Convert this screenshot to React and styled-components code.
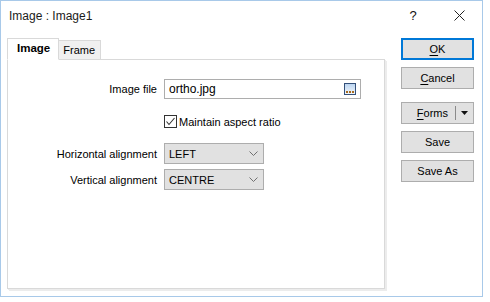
import React from 'react';
import styled, { createGlobalStyle } from 'styled-components';

const Global = createGlobalStyle`
  html, body {
    margin: 0;
    background: #ffffff;
  }
  body {
    font-family: 'Liberation Sans', Arial, sans-serif;
    font-size: 11px;
    color: #000;
  }
`;

const Window = styled.div`
  width: 483px;
  height: 297px;
  box-sizing: border-box;
  border: 1px solid #a8c9e9;
  background: #ffffff;
  display: flex;
  flex-direction: column;
`;

const TitleBar = styled.div`
  height: 29px;
  display: flex;
  align-items: center;
  padding-left: 8px;
`;

const Title = styled.div`
  flex: 1;
  color: #1b1b1b;
  font-size: 12px;
`;

const TitleButton = styled.div`
  width: 46px;
  height: 29px;
  display: flex;
  align-items: center;
  justify-content: center;
  font-size: 13px;
  color: #111;
`;

const Body = styled.div`
  display: flex;
  padding: 8px 0 0 6px;
`;

const TabArea = styled.div`
  width: 378px;
  display: flex;
  flex-direction: column;
`;

const TabStrip = styled.div`
  display: flex;
  align-items: flex-end;
  height: 21px;
  position: relative;
  z-index: 1;
`;

const Tab = styled.div`
  box-sizing: border-box;
  height: ${p => (p.$active ? '22px' : '19px')};
  padding: ${p => (p.$active ? '0 8px 0 9px' : '1px 5px 0 4px')};
  border: 1px solid #d9d9d9;
  border-bottom: ${p => (p.$active ? '1px solid #fff' : 'none')};
  border-left: ${p => (p.$first ? '1px solid #d9d9d9' : 'none')};
  background: ${p => (p.$active ? '#fff' : '#f0f0f0')};
  font-size: ${p => (p.$active ? '11.5px' : '11px')};
  font-weight: ${p => (p.$active ? 700 : 400)};
  display: flex;
  align-items: center;
  margin-bottom: ${p => (p.$active ? '-1px' : '0')};
  line-height: 1;
`;

const Panel = styled.div`
  box-sizing: border-box;
  height: 230px;
  border: 1px solid #d9d9d9;
  box-shadow: 1px 1px 0 #ececec, 2px 2px 0 #ececec;
  background: #fff;
  padding: 19px 0 0 0;
`;

const FormGrid = styled.div`
  display: grid;
  grid-template-columns: 149px auto;
  column-gap: 7px;
  align-items: center;
`;

const Label = styled.div`
  text-align: right;
  margin-top: ${p => p.$mt || 0}px;
  white-space: nowrap;
`;

const Cell = styled.div`
  margin-top: ${p => p.$mt || 0}px;
  display: flex;
  align-items: center;
`;

const TextInput = styled.div`
  box-sizing: border-box;
  width: 197px;
  height: 20px;
  border: 1px solid #adadad;
  display: flex;
  align-items: center;
  padding: 0 4px 0 4px;
  justify-content: space-between;
  font-size: 12px;
`;

const CheckRow = styled.label`
  display: flex;
  align-items: center;
  gap: 2px;
  height: 13px;
`;

const Box = styled.span`
  width: 13px;
  height: 13px;
  box-sizing: border-box;
  border: 1px solid #333;
  display: flex;
  align-items: center;
  justify-content: center;
  background: #fff;
`;

const Combo = styled.div`
  box-sizing: border-box;
  width: 100px;
  height: 21px;
  border: 1px solid #adadad;
  background: #e1e1e1;
  display: flex;
  align-items: center;
  justify-content: space-between;
  padding: 0 5px 0 4px;
`;

const ButtonColumn = styled.div`
  display: flex;
  flex-direction: column;
  padding-left: 16px;
`;

const Button = styled.div`
  box-sizing: border-box;
  width: 73px;
  height: 22px;
  margin-top: ${p => p.$mt || 0}px;
  border: ${p => (p.$default ? '2px solid #0078d7' : '1px solid #adadad')};
  background: #e1e1e1;
  display: flex;
  align-items: center;
  justify-content: center;
  u {
    text-decoration: underline;
    text-underline-offset: 2px;
  }
`;

const SplitButton = styled(Button)`
  justify-content: flex-end;
  padding-right: 5px;
`;

const Divider = styled.span`
  width: 1px;
  height: 14px;
  background: #8a8a8a;
  margin: 0 5px 0 7px;
`;

const Chevron = () => (
  <svg width="9" height="5" viewBox="0 0 9 5">
    <polyline points="0.5,0.5 4.5,4.5 8.5,0.5" fill="none" stroke="#707070" strokeWidth="1" />
  </svg>
);

const Ellipsis = () => (
  <svg width="12" height="12" viewBox="0 0 12 12">
    <defs>
      <linearGradient id="eg" x1="0" y1="0" x2="0" y2="1">
        <stop offset="0" stopColor="#b9d3f0" />
        <stop offset="1" stopColor="#f4f8fc" />
      </linearGradient>
    </defs>
    <rect x="0.5" y="0.5" width="11" height="11" fill="url(#eg)" stroke="#34507a" />
    <rect x="2" y="8" width="2" height="2" fill="#a86a1c" />
    <rect x="5" y="8" width="2" height="2" fill="#a86a1c" />
    <rect x="8" y="8" width="2" height="2" fill="#a86a1c" />
  </svg>
);

export default function App() {
  return (
    <>
      <Global />
      <Window>
        <TitleBar>
          <Title>Image : Image1</Title>
          <TitleButton>?</TitleButton>
          <TitleButton>
            <svg width="11" height="11" viewBox="0 0 11 11">
              <path d="M0.5 0.5 L10.5 10.5 M10.5 0.5 L0.5 10.5" stroke="#222" strokeWidth="1" />
            </svg>
          </TitleButton>
        </TitleBar>
        <Body>
          <TabArea>
            <TabStrip>
              <Tab $active $first>Image</Tab>
              <Tab>Frame</Tab>
            </TabStrip>
            <Panel>
              <FormGrid>
                <Label>Image file</Label>
                <Cell>
                  <TextInput>
                    <span>ortho.jpg</span>
                    <Ellipsis />
                  </TextInput>
                </Cell>
                <span />
                <Cell $mt={16}>
                  <CheckRow>
                    <Box>
                      <svg width="11" height="11" viewBox="0 0 11 11">
                        <polyline points="1.5,5.5 4,8.5 9.5,2" fill="none" stroke="#333" strokeWidth="1.1" />
                      </svg>
                    </Box>
                    Maintain aspect ratio
                  </CheckRow>
                </Cell>
                <Label $mt={15}>Horizontal alignment</Label>
                <Cell $mt={15}>
                  <Combo>
                    <span>LEFT</span>
                    <Chevron />
                  </Combo>
                </Cell>
                <Label $mt={5}>Vertical alignment</Label>
                <Cell $mt={5}>
                  <Combo>
                    <span>CENTRE</span>
                    <Chevron />
                  </Combo>
                </Cell>
              </FormGrid>
            </Panel>
          </TabArea>
          <ButtonColumn>
            <Button $default><span><u>O</u>K</span></Button>
            <Button $mt={7}><span><u>C</u>ancel</span></Button>
            <SplitButton $mt={13}>
              <span><u>F</u>orms</span>
              <Divider />
              <svg width="7" height="4" viewBox="0 0 7 4">
                <polygon points="0,0 7,0 3.5,4" fill="#111" />
              </svg>
            </SplitButton>
            <Button $mt={7}>Save</Button>
            <Button $mt={7}>Save As</Button>
          </ButtonColumn>
        </Body>
      </Window>
    </>
  );
}
